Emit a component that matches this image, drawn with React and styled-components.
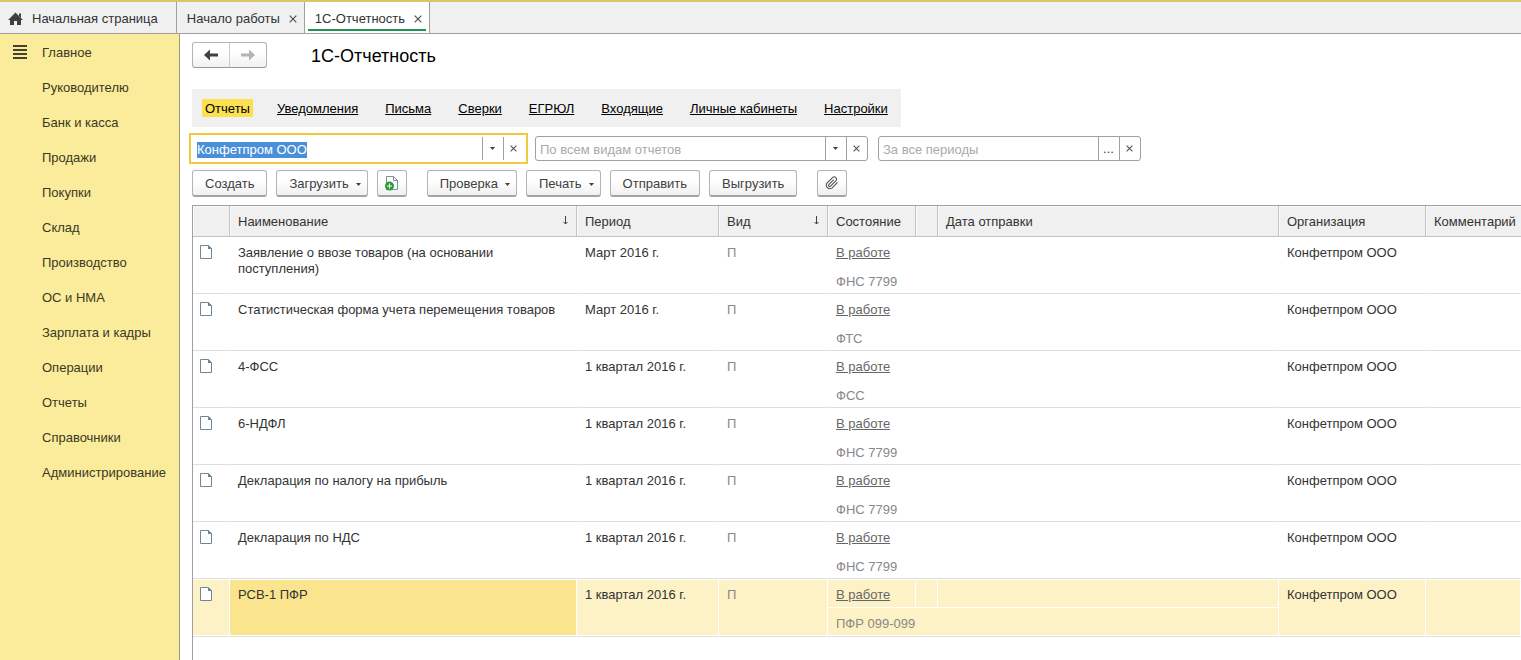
import React, { useEffect, useRef, useState } from 'react';
import styled, { createGlobalStyle, css } from 'styled-components';

const GlobalStyle = createGlobalStyle`
  * {
    box-sizing: border-box;
  }
  body {
    margin: 0;
    background: #fff;
    color: #333;
    font: 13px/16px 'Liberation Sans', Arial, sans-serif;
  }
  button,
  input {
    font: inherit;
    color: inherit;
  }
  svg {
    display: block;
    flex: none;
  }
`;

const Page = styled.div`
  display: flex;
  flex-direction: column;
  min-height: 100vh;
  overflow: hidden;
`;

const TabBar = styled.header`
  display: flex;
  height: 34px;
  background: #f0f0f0;
  border-top: 2px solid #d9c56a;
  border-bottom: 1px solid #a0a0a0;
`;

const Tab = styled.div`
  display: flex;
  align-items: center;
  gap: 9px;
  padding: 2px 7px 0 10px;
  border-right: 1px solid #a0a0a0;
  ${({ $active }) =>
    $active &&
    css`
      background: linear-gradient(#1f9254, #1f9254) center bottom 2px / calc(100% - 6px) 2px no-repeat #fff;
    `}
`;

const HomeTab = styled(Tab)`
  padding: 2px 18px 0 8px;
`;

const TabButton = styled.button`
  display: flex;
  align-items: center;
  gap: 9px;
  padding: 0;
  border: 0;
  background: none;
  white-space: nowrap;
`;

const CloseButton = styled.button`
  padding: 0;
  border: 0;
  background: none;
`;

const Body = styled.div`
  display: flex;
  flex: 1;
`;

const Sidebar = styled.nav`
  flex: none;
  width: 180px;
  padding-top: 1px;
  background: #faec9b;
  border-right: 1px solid #a39c73;
`;

const SideLink = styled.a`
  display: grid;
  grid-template-columns: 30px 1fr;
  align-items: center;
  height: 35px;
  padding-left: 12px;
  color: #3b3824;
  text-decoration: none;
  white-space: nowrap;
`;

const Main = styled.main`
  display: flex;
  flex-direction: column;
  flex: 1;
  min-width: 0;
  padding: 8px 0 0 12px;
`;

const TitleRow = styled.div`
  display: flex;
  align-items: center;
  gap: 44px;
  margin-bottom: 21px;
`;

const History = styled.div`
  display: flex;
  height: 26px;
  border: 1px solid #b4b4b4;
  border-bottom-color: #999;
  border-radius: 3px;
  background: linear-gradient(#fff 40%, #f0f0f0);
`;

const HistoryButton = styled.button`
  display: flex;
  align-items: center;
  justify-content: center;
  width: 36px;
  padding: 0;
  border: 0;
  background: none;
  color: ${({ disabled }) => (disabled ? '#b4b4b4' : '#404040')};

  & + & {
    width: 37px;
    border-left: 1px solid #ccc;
  }
`;

const Title = styled.h1`
  margin: 0;
  padding-top: 2px;
  color: #000;
  font-size: 18px;
  font-weight: normal;
  line-height: 24px;
`;

const Sections = styled.nav`
  display: flex;
  align-self: flex-start;
  align-items: center;
  gap: 21px;
  height: 38px;
  padding: 0 10px;
  background: #f0f0f0;
`;

const SectionLink = styled.a`
  padding: 2px 3px 0;
  color: #000;
  white-space: nowrap;
  text-decoration: ${({ $active }) => ($active ? 'none' : 'underline')};
  text-underline-offset: 1px;
  background: ${({ $active }) => ($active ? '#fae052' : 'none')};
`;

const Filters = styled.div`
  display: flex;
  gap: 10px;
  margin: 9px 0;
`;

const Field = styled.div`
  display: flex;
  width: ${({ $narrow }) => ($narrow ? '263px' : '333px')};
  height: 25px;
  border: 1px solid #a0a0a0;
  border-radius: 3px;
  background: #fff;

  &:focus-within {
    border-color: transparent;
    outline: 2px solid #f0ca3e;
    outline-offset: 1px;
    border-radius: 0;
  }
`;

const FieldInput = styled.input`
  flex: 1;
  min-width: 0;
  padding: 2px 4px 0;
  border: 0;
  outline: 0;
  background: none;

  &::placeholder {
    color: #aaa;
    opacity: 1;
  }
  &::selection {
    background: #4a90d9;
    color: #fff;
  }
`;

const FieldButton = styled.button`
  display: flex;
  align-items: center;
  justify-content: center;
  width: 21px;
  padding: 0 1px 0 0;
  border: 0;
  border-left: 1px solid #a0a0a0;
  background: none;
  color: #404040;
`;

const Toolbar = styled.div`
  display: flex;
  gap: 20px;
  margin-bottom: 8px;
`;

const ToolGroup = styled.div`
  display: flex;
  gap: 9px;
`;

const ToolButton = styled.button`
  display: flex;
  align-items: center;
  justify-content: center;
  gap: 7px;
  height: 27px;
  padding: ${({ $menu }) => ($menu ? '2px 6px 0 12px' : '2px 12px 0')};
  border: 1px solid #b4b4b4;
  border-bottom: 2px solid #a4a4a4;
  border-radius: 3px;
  background: linear-gradient(#fff 40%, #f0f0f0);
  color: #404040;
  white-space: nowrap;
`;

const IconButton = styled(ToolButton)`
  width: 30px;
  padding: 0;
`;

const TableArea = styled.div`
  flex: 1;
  border-top: 1px solid #a0a0a0;
  border-left: 1px solid #a0a0a0;
`;

const Table = styled.table`
  width: 100%;
  table-layout: fixed;
  border-collapse: separate;
  border-spacing: 0;
`;

const Th = styled.th`
  height: 31px;
  padding: 2px 8px 0;
  border-right: 1px solid #c4c4c4;
  border-bottom: 1px solid #c4c4c4;
  background: #f0f0f0;
  box-shadow: inset 1px 1px #fafafa;
  font-weight: normal;
  text-align: left;
  white-space: nowrap;

  &:last-child {
    padding-right: 0;
    border-right: 0;
  }
`;

const ThContent = styled.div`
  display: flex;
  align-items: center;
  justify-content: space-between;
`;

const Td = styled.td`
  height: 28px;
  padding: 8px 8px 0;
  border-right: 1px solid transparent;
  vertical-align: top;
  color: ${({ $muted }) => ($muted ? '#888' : '#333')};

  &[rowspan] {
    border-bottom: 1px solid #dedede;
  }
`;

const IconTd = styled(Td)`
  padding-left: 7px;
`;

const DestTd = styled(Td)`
  height: 29px;
  padding-top: 9px;
  border-bottom: 1px solid #dedede;
`;

const Report = styled.tbody`
  ${({ $selected }) =>
    $selected &&
    css`
      ${Td} {
        border-right-color: #fff;
        background: #fdf2c6;
        box-shadow: inset 0 1px #fff;
      }
      ${IconTd} + ${Td} {
        background: #fbe48e;
      }
      ${Td}[rowspan],
      ${DestTd} {
        box-shadow: inset 0 1px #fff, inset 0 -1px #fff;
      }
      ${DestTd} {
        height: 30px;
      }
    `}
`;

const StateLink = styled.a`
  color: #666;
  text-underline-offset: 1px;
`;

const HomeIcon = () => (
  <svg width="15" height="14" viewBox="0 0 15 14" fill="#404040" aria-hidden="true">
    <path d="M7.5 0.5 L15 8 H13 V13 H9 V9 H6 V13 H2 V8 H0 Z" />
    <path d="M11 1.5 H13 V6 L11 4 Z" />
  </svg>
);

const MenuIcon = () => (
  <svg width="15" height="15" viewBox="0 0 15 15" fill="#45422c" aria-hidden="true">
    <path d="M1 0h14v2H1zM1 4h14v2H1zM1 8h14v2H1zM1 12h14v2H1z" />
  </svg>
);

const ArrowIcon = ({ right }) => (
  <svg width="14" height="12" viewBox="0 0 14 12" fill="currentColor" aria-hidden="true">
    <path d={right ? 'M14 6 L8 0.5 V4.5 H0 V7.5 H8 V11.5 Z' : 'M0 6 L6 0.5 V4.5 H14 V7.5 H6 V11.5 Z'} />
  </svg>
);

const CrossIcon = ({ size = 7 }) => (
  <svg width={size} height={size} viewBox="0 0 8 8" stroke="#505050" strokeWidth="1.2" aria-hidden="true">
    <path d="M0.7 0.7 L7.3 7.3 M7.3 0.7 L0.7 7.3" />
  </svg>
);

const CaretIcon = () => (
  <svg width="5" height="3" viewBox="0 0 5 3" fill="#404040" aria-hidden="true">
    <path d="M0 0 H5 L2.5 3 Z" />
  </svg>
);

const SortIcon = () => (
  <svg width="5" height="12" viewBox="0 0 5 12" fill="none" stroke="#404040" aria-hidden="true">
    <path d="M2.5 0 V8 M0.5 6 L2.5 8 L4.5 6" />
  </svg>
);

const DocIcon = () => (
  <svg width="12" height="14" viewBox="0 0 12 14" aria-hidden="true">
    <path d="M0.5 0.5 H8.5 L11.5 3.5 V13.5 H0.5 Z" fill="#fff" stroke="#6f8794" />
    <path d="M8 0 L12 4 H8 Z" fill="#6f8794" />
  </svg>
);

const AddDocIcon = () => (
  <svg width="14" height="16" viewBox="0 0 14 16" fill="none" aria-hidden="true">
    <path d="M1.5 1.5 H8.5 L12.5 5.5 V14.5 H1.5 Z" fill="#fff" stroke="#7d8f9a" />
    <path d="M8.5 1.5 V5.5 H12.5" stroke="#7d8f9a" />
    <circle cx="4.5" cy="11" r="4.5" fill="#2d9b38" />
    <path d="M4.5 8.5 V13.5 M2 11 H7" stroke="#fff" />
  </svg>
);

const ClipIcon = () => (
  <svg width="14" height="14" viewBox="0 0 24 24" fill="none" stroke="#505050" strokeWidth="1.8" aria-hidden="true">
    <path d="M21.4 11.1 l-9.2 9.1 a6 6 0 0 1-8.5-8.4 l9.2-9.2 a4 4 0 0 1 5.7 5.6 l-9.2 9.2 a2 2 0 0 1-2.9-2.8 l8.5-8.5" />
  </svg>
);

const menu = [
  'Главное',
  'Руководителю',
  'Банк и касса',
  'Продажи',
  'Покупки',
  'Склад',
  'Производство',
  'ОС и НМА',
  'Зарплата и кадры',
  'Операции',
  'Отчеты',
  'Справочники',
  'Администрирование',
];

const sections = ['Отчеты', 'Уведомления', 'Письма', 'Сверки', 'ЕГРЮЛ', 'Входящие', 'Личные кабинеты', 'Настройки'];

const columns = [
  { title: '', width: 37 },
  { title: 'Наименование', width: 347, sort: true },
  { title: 'Период', width: 142 },
  { title: 'Вид', width: 109, sort: true },
  { title: 'Состояние', width: 88 },
  { title: '', width: 22 },
  { title: 'Дата отправки', width: 341 },
  { title: 'Организация', width: 147 },
  { title: 'Комментарий' },
];

const reports = [
  { name: 'Заявление о ввозе товаров (на основании поступления)', period: 'Март 2016 г.', dest: 'ФНС 7799' },
  { name: 'Статистическая форма учета перемещения товаров', period: 'Март 2016 г.', dest: 'ФТС' },
  { name: '4-ФСС', period: '1 квартал 2016 г.', dest: 'ФСС' },
  { name: '6-НДФЛ', period: '1 квартал 2016 г.', dest: 'ФНС 7799' },
  { name: 'Декларация по налогу на прибыль', period: '1 квартал 2016 г.', dest: 'ФНС 7799' },
  { name: 'Декларация по НДС', period: '1 квартал 2016 г.', dest: 'ФНС 7799' },
  { name: 'РСВ-1 ПФР', period: '1 квартал 2016 г.', dest: 'ПФР 099-099' },
];

// каждый отчет занимает две строки таблицы: состояние и под ним получатель
const ReportRows = ({ report, selected, onSelect }) => (
  <Report $selected={selected} onClick={onSelect}>
    <tr>
      <IconTd rowSpan={2}>
        <DocIcon />
      </IconTd>
      <Td rowSpan={2}>{report.name}</Td>
      <Td rowSpan={2}>{report.period}</Td>
      <Td rowSpan={2} $muted>П</Td>
      <Td>
        <StateLink href="#state">В работе</StateLink>
      </Td>
      <Td />
      <Td />
      <Td rowSpan={2}>Конфетпром ООО</Td>
      <Td rowSpan={2} />
    </tr>
    <tr>
      <DestTd colSpan={3} $muted>{report.dest}</DestTd>
    </tr>
  </Report>
);

const App = () => {
  const [company, setCompany] = useState('Конфетпром ООО');
  const [kind, setKind] = useState('');
  const [period, setPeriod] = useState('');
  const [selected, setSelected] = useState(6);
  const companyRef = useRef(null);

  useEffect(() => {
    companyRef.current.focus();
    companyRef.current.select();
  }, []);

  return (
    <Page>
      <GlobalStyle />
      <TabBar>
        <HomeTab>
          <TabButton>
            <HomeIcon />
            Начальная страница
          </TabButton>
        </HomeTab>
        <Tab>
          <TabButton>Начало работы</TabButton>
          <CloseButton aria-label="Закрыть Начало работы">
            <CrossIcon size={8} />
          </CloseButton>
        </Tab>
        <Tab $active>
          <TabButton>1С-Отчетность</TabButton>
          <CloseButton aria-label="Закрыть 1С-Отчетность">
            <CrossIcon size={8} />
          </CloseButton>
        </Tab>
      </TabBar>
      <Body>
        <Sidebar>
          {menu.map((item, i) => (
            <SideLink key={item} href="#menu">
              <span>{i === 0 && <MenuIcon />}</span>
              {item}
            </SideLink>
          ))}
        </Sidebar>
        <Main>
          <TitleRow>
            <History>
              <HistoryButton aria-label="Назад">
                <ArrowIcon />
              </HistoryButton>
              <HistoryButton aria-label="Вперед" disabled>
                <ArrowIcon right />
              </HistoryButton>
            </History>
            <Title>1С-Отчетность</Title>
          </TitleRow>
          <Sections>
            {sections.map((item, i) => (
              <SectionLink key={item} href="#section" $active={i === 0}>
                {item}
              </SectionLink>
            ))}
          </Sections>
          <Filters>
            <Field>
              <FieldInput
                ref={companyRef}
                aria-label="Организация"
                value={company}
                onChange={(e) => setCompany(e.target.value)}
              />
              <FieldButton aria-label="Выбрать организацию">
                <CaretIcon />
              </FieldButton>
              <FieldButton aria-label="Очистить организацию" onClick={() => setCompany('')}>
                <CrossIcon />
              </FieldButton>
            </Field>
            <Field>
              <FieldInput
                aria-label="Вид отчета"
                placeholder="По всем видам отчетов"
                value={kind}
                onChange={(e) => setKind(e.target.value)}
              />
              <FieldButton aria-label="Выбрать вид отчета">
                <CaretIcon />
              </FieldButton>
              <FieldButton aria-label="Очистить вид отчета" onClick={() => setKind('')}>
                <CrossIcon />
              </FieldButton>
            </Field>
            <Field $narrow>
              <FieldInput
                aria-label="Период"
                placeholder="За все периоды"
                value={period}
                onChange={(e) => setPeriod(e.target.value)}
              />
              <FieldButton aria-label="Выбрать период">...</FieldButton>
              <FieldButton aria-label="Очистить период" onClick={() => setPeriod('')}>
                <CrossIcon />
              </FieldButton>
            </Field>
          </Filters>
          <Toolbar>
            <ToolGroup>
              <ToolButton>Создать</ToolButton>
              <ToolButton $menu>
                Загрузить
                <CaretIcon />
              </ToolButton>
              <IconButton aria-label="Добавить документ">
                <AddDocIcon />
              </IconButton>
            </ToolGroup>
            <ToolGroup>
              <ToolButton $menu>
                Проверка
                <CaretIcon />
              </ToolButton>
              <ToolButton $menu>
                Печать
                <CaretIcon />
              </ToolButton>
              <ToolButton>Отправить</ToolButton>
              <ToolButton>Выгрузить</ToolButton>
            </ToolGroup>
            <IconButton aria-label="Присоединенные файлы">
              <ClipIcon />
            </IconButton>
          </Toolbar>
          <TableArea>
            <Table>
              <colgroup>
                {columns.map((column, i) => (
                  <col key={i} width={column.width} />
                ))}
              </colgroup>
              <thead>
                <tr>
                  {columns.map((column, i) => (
                    <Th key={i} scope="col">
                      <ThContent>
                        {column.title}
                        {column.sort && <SortIcon />}
                      </ThContent>
                    </Th>
                  ))}
                </tr>
              </thead>
              {reports.map((report, i) => (
                <ReportRows
                  key={report.name}
                  report={report}
                  selected={i === selected}
                  onSelect={() => setSelected(i)}
                />
              ))}
            </Table>
          </TableArea>
        </Main>
      </Body>
    </Page>
  );
};

export default App;
